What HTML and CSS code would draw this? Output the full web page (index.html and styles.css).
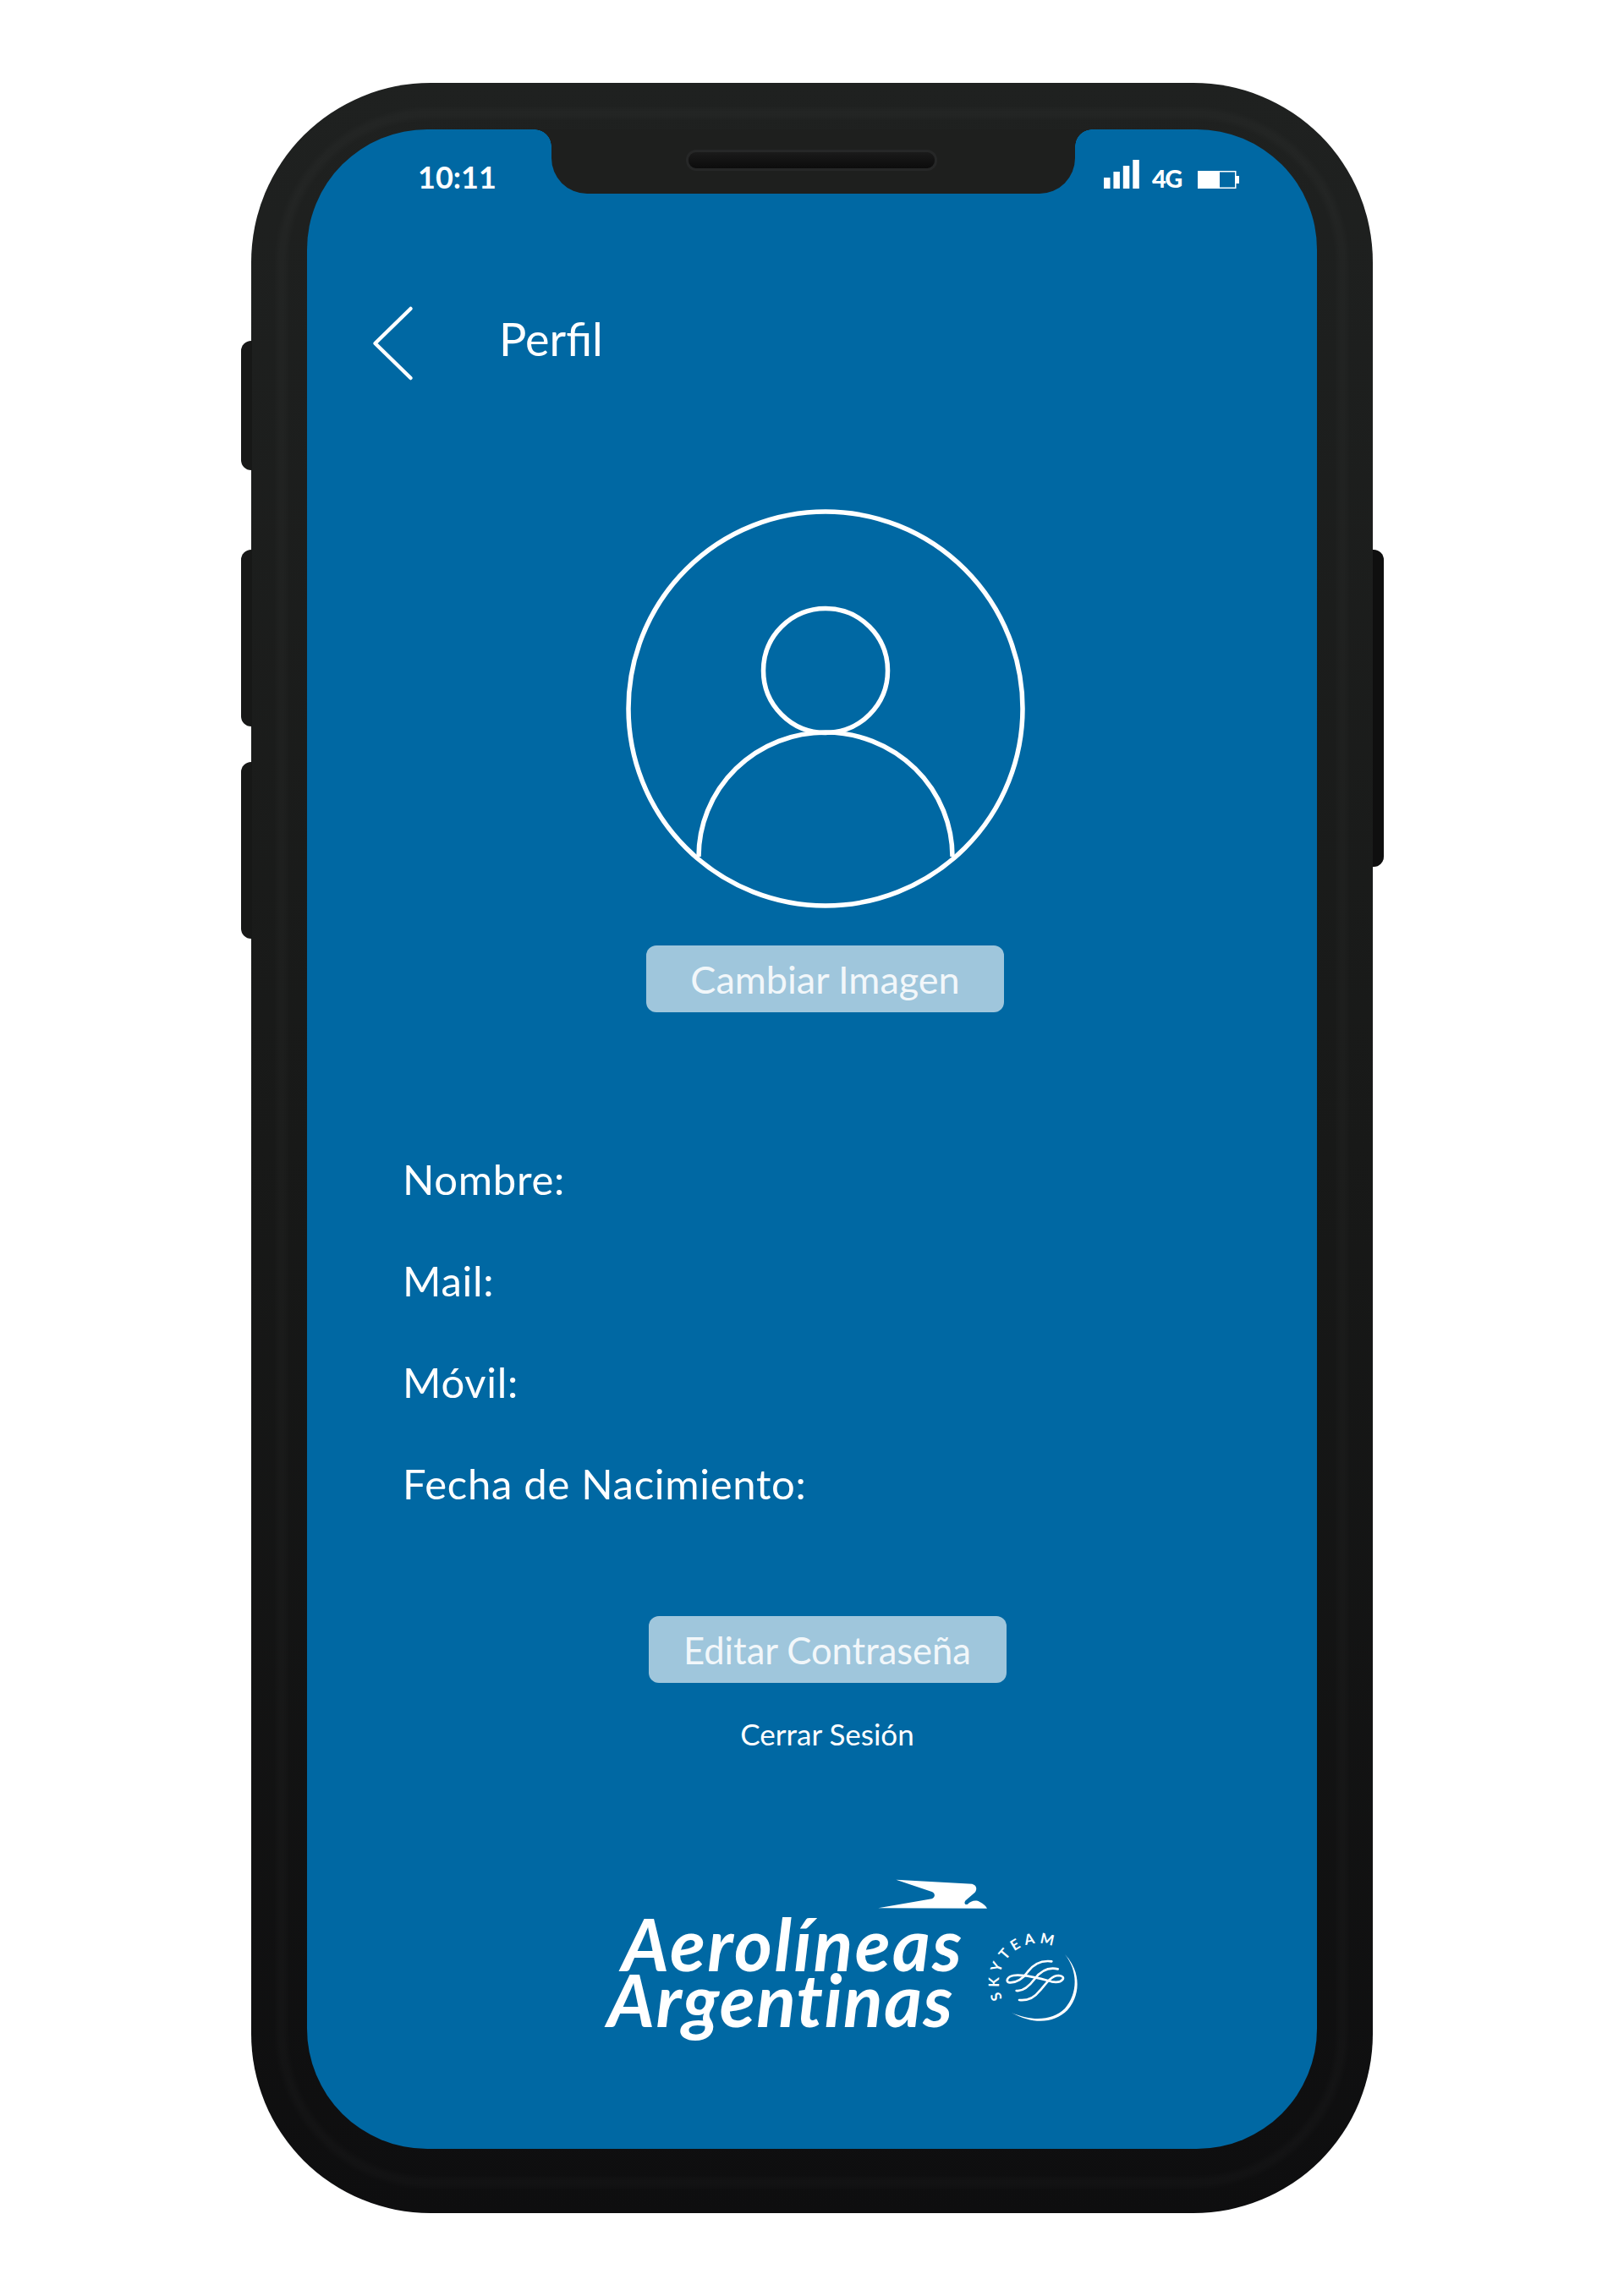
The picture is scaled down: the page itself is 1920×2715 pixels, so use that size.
FILE: index.html
```html
<!DOCTYPE html>
<html lang="es">
<head>
    <meta charset="UTF-8">
    <meta name="viewport" content="width=device-width, initial-scale=1.0">
    <title>Perfil</title>
    <link rel="stylesheet" href="styles.css">
</head>
<body>
    <div class="device">
        <span class="side-btn side-btn-mute"></span>
        <span class="side-btn side-btn-up"></span>
        <span class="side-btn side-btn-down"></span>
        <span class="side-btn side-btn-power"></span>

        <main class="screen">
            <div class="notch"><span class="speaker"></span></div>

            <div class="status-bar">
                <span class="time">10:11</span>
                <div class="status-icons">
                    <svg class="signal" width="42" height="34" viewBox="0 0 42 34" fill="#fff">
                        <rect x="0" y="21" width="7.5" height="13"/>
                        <rect x="11.4" y="14" width="7.5" height="20"/>
                        <rect x="22.8" y="7" width="7.5" height="27"/>
                        <rect x="34.3" y="0" width="7.5" height="34"/>
                    </svg>
                    <span class="network">4G</span>
                    <svg class="battery" width="49" height="21" viewBox="0 0 49 21">
                        <rect x="0.75" y="0.75" width="44" height="19.5" fill="none" stroke="#fff" stroke-width="1.5"/>
                        <rect x="0" y="0" width="26" height="21" fill="#fff"/>
                        <rect x="45" y="6" width="4" height="9" fill="#fff"/>
                    </svg>
                </div>
            </div>

            <header class="top-bar">
                <svg class="back" width="54" height="90" viewBox="0 0 54 90" fill="none" stroke="#fff" stroke-width="4.5" stroke-linecap="round" stroke-linejoin="round">
                    <path d="M47.5 4 L5.5 45 L47.5 86"/>
                </svg>
                <h1 class="title">Perfil</h1>
            </header>

            <section class="photo">
                <svg class="avatar" width="474" height="474" viewBox="0 0 474 474" fill="none" stroke="#fff" stroke-width="5.5">
                    <circle cx="237" cy="237" r="233"/>
                    <circle cx="237" cy="192" r="73.5"/>
                    <path d="M87 412 A150 147 0 0 1 387 412"/>
                </svg>
                <button class="btn btn-photo" type="button">Cambiar Imagen</button>
            </section>

            <section class="fields">
                <p>Nombre:</p>
                <p>Mail:</p>
                <p>Móvil:</p>
                <p>Fecha de Nacimiento:</p>
            </section>

            <section class="actions">
                <button class="btn btn-password" type="button">Editar Contraseña</button>
                <a class="logout" href="#">Cerrar Sesión</a>
            </section>

            <footer class="brand">
                <div class="wordmark">
                    <svg class="bird" width="145" height="50" viewBox="0 0 435 150" fill="#fff">
                        <path d="M88 23 L358 38 C372 42 378 55 368 68 L335 97 C328 105 332 115 342 110 C352 100 370 92 385 102 C398 108 408 118 411 125 L25 124 L215 91 C228 85 228 72 215 66 Z"/>
                    </svg>
                    <div class="brand-line brand-line-top">Aerolíneas</div>
                    <div class="brand-line">Argentinas</div>
                </div>
                <svg class="skyteam" width="150" height="150" viewBox="-15 -15 150 150" fill="none">
                    <defs>
                        <path id="skyteam-arc" d="M20.3 78.4 A46 46 0 0 1 81.4 17.3"/>
                    </defs>
                    <text class="skyteam-text" fill="#fff">
                        <textPath href="#skyteam-arc" textLength="110">SKYTEAM</textPath>
                    </text>
                    <path fill="#fff" d="M94 26 C113 46 113 74 97 92 C81 108 56 109 31 95 C56 106 80 104 94 90 C109 73 110 46 94 26 Z"/>
                    <g transform="translate(-5 -5) scale(.3333)" stroke="#fff" stroke-width="8" stroke-linecap="round">
                        <path d="M250 118 C205 112 180 135 165 155 C150 178 125 195 100 193 C85 190 92 172 115 168 C150 162 215 180 250 190 C290 197 305 170 275 168 C245 168 225 205 205 225 C190 245 165 258 135 255"/>
                        <path d="M272 145 C230 135 205 160 190 180 C175 200 150 225 125 222"/>
                    </g>
                </svg>
            </footer>
        </main>
    </div>
</body>
</html>
```

FILE: styles.css
```css
/* Global styles */
* {
    box-sizing: border-box;
}

body {
    margin: 0;
    padding: 98px 297px;
    background-color: #fff;
    font-family: "Lato", "Open Sans", sans-serif;
    color: #fff;
}

/* Phone frame */
.device {
    position: relative;
    width: 1326px;
    height: 2519px;
    padding: 55px 66px 76px;
    border-radius: 212px;
    background: linear-gradient(#1f2120, #181918 50%, #0e0e0f);
}

.device::before {
    content: "";
    position: absolute;
    inset: 32px;
    border: 8px solid rgba(255, 255, 255, 0.035);
    border-radius: 180px;
    filter: blur(5px);
}

.side-btn {
    position: absolute;
    left: -12.5px;
    width: 13px;
    background-color: #171817;
    border-radius: 12px 0 0 12px;
}

.side-btn-mute { top: 305px; height: 153px; }
.side-btn-up { top: 552px; height: 209px; }
.side-btn-down { top: 803px; height: 209px; }

.side-btn-power {
    left: auto;
    right: -12.5px;
    top: 552px;
    height: 375px;
    background-color: #0f0f0f;
    border-radius: 0 12px 12px 0;
}

.screen {
    position: relative;
    height: 2388px;
    border-radius: 142px;
    background-color: #0068a3;
    overflow: hidden;
}

/* Notch */
.notch {
    position: absolute;
    top: 0;
    left: 289px;
    width: 619px;
    height: 76px;
    background-color: #1e1f1e;
    border-radius: 0 0 42px 42px;
}

.notch::before,
.notch::after {
    content: "";
    position: absolute;
    top: 0;
    width: 20px;
    height: 20px;
}

.notch::before {
    left: -20px;
    background: radial-gradient(circle at 0 100%, transparent 19.5px, #1e1f1e 20px);
}

.notch::after {
    right: -20px;
    background: radial-gradient(circle at 100% 100%, transparent 19.5px, #1e1f1e 20px);
}

.speaker {
    position: absolute;
    top: 24px;
    left: 159px;
    width: 297px;
    height: 25px;
    border: 3px solid #262727;
    border-radius: 12px;
    background: linear-gradient(#1a1a1a, #0c0c0c);
}

/* Status bar */
.status-bar {
    display: flex;
    height: 76px;
    padding: 36px 92px 0 131px;
}

.time {
    margin-top: 2px;
    font-size: 36px;
    font-weight: 700;
    line-height: 36px;
}

.status-icons {
    display: flex;
    align-items: flex-end;
    height: 34px;
    margin-left: auto;
}

.network {
    width: 35px;
    margin: 0 19px 0 15px;
    font-size: 29px;
    font-weight: 900;
    line-height: 24px;
    letter-spacing: -1.5px;
    white-space: nowrap;
}

/* Top bar */
.top-bar {
    display: flex;
    margin-top: 132px;
    padding-left: 75px;
}

.title {
    margin: 10px 0 0 98px;
    font-size: 54px;
    font-weight: 400;
    line-height: 60px;
}

/* Profile photo */
.photo {
    display: flex;
    flex-direction: column;
    align-items: center;
    margin-top: 150px;
    padding-left: 31px;
}

.btn {
    width: 423px;
    height: 79px;
    padding: 0;
    border: none;
    border-radius: 12px;
    background-color: #9fc6dc;
    color: #f2f7fa;
    font-family: inherit;
}

.btn-photo {
    margin-top: 43px;
    font-size: 45px;
}

.btn-password {
    font-size: 43.5px;
}

/* Data rows */
.fields {
    display: flex;
    flex-direction: column;
    gap: 60px;
    margin-top: 167px;
    padding-left: 113px;
}

.fields p {
    margin: 0;
    font-size: 49px;
    line-height: 60px;
    letter-spacing: 0.7px;
}

.actions {
    display: flex;
    flex-direction: column;
    align-items: center;
    margin-top: 127px;
    padding-left: 36px;
}

.logout {
    margin-top: 38px;
    color: #fff;
    font-size: 35px;
    line-height: 44px;
    text-decoration: none;
}

/* Logos */
.brand {
    display: flex;
    margin-top: 143px;
    padding-left: 355px;
}

.wordmark {
    width: 447px;
}

.bird {
    display: block;
    margin-left: 312px;
}

.brand-line {
    font-size: 86px;
    font-weight: 700;
    font-style: italic;
    line-height: 66px;
    letter-spacing: 1.5px;
    white-space: nowrap;
}

.brand-line-top {
    padding-left: 17px;
    letter-spacing: 2.4px;
}

.skyteam {
    margin: 55px 0 0 -15px;
}

.skyteam-text {
    font-size: 17px;
    font-weight: 700;
}
```
